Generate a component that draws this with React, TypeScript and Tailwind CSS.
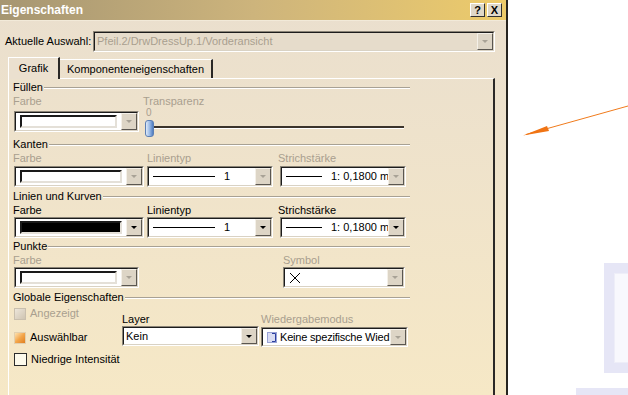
import React from "react";

const GRAY = "text-[#a99f8f]";

function DropBtn({ disabled }: { disabled?: boolean }) {
  return (
    <div className="w-[16px] h-full shrink-0 bg-[#ddd5c6] border border-t-[#f4f0e8] border-l-[#f4f0e8] border-b-[#5a5650] border-r-[#5a5650] flex items-center justify-center">
      <div
        className={`w-0 h-0 border-l-[3px] border-r-[3px] border-t-[3px] border-l-transparent border-r-transparent ${
          disabled ? "border-t-[#a8a296]" : "border-t-black"
        }`}
      />
    </div>
  );
}

function Combo({
  className = "",
  children,
  disabled,
  fieldBg = "bg-white",
  h = "h-[21px]",
}: {
  className?: string;
  children?: React.ReactNode;
  disabled?: boolean;
  fieldBg?: string;
  h?: string;
}) {
  return (
    <div
      className={`flex ${h} border border-t-[#8a8477] border-l-[#8a8477] border-b-white border-r-white ${className}`}
    >
      <div className="flex flex-1 min-w-0 border border-t-[#1c1c1c] border-l-[#1c1c1c] border-b-[#d9d2c4] border-r-[#d9d2c4]">
        <div className={`flex-1 min-w-0 ${fieldBg} flex items-center overflow-hidden whitespace-nowrap`}>
          {children}
        </div>
        <DropBtn disabled={disabled} />
      </div>
    </div>
  );
}

function Swatch({ black }: { black?: boolean }) {
  return (
    <div
      className={`flex-1 mx-[4px] h-[13px] border-2 border-t-[#1a1a1a] border-l-[#1a1a1a] border-b-[#e4e0d8] border-r-[#e4e0d8] ${
        black ? "bg-black" : "bg-white"
      }`}
    />
  );
}

function LineType() {
  return (
    <div className="flex items-center w-full pl-[4px]">
      <div className="w-[62px] h-px bg-black shrink-0" />
      <span className="ml-[9px] shrink-0">1</span>
    </div>
  );
}

function Thick() {
  return (
    <div className="flex items-center pl-[4px] shrink-0">
      <div className="w-[36px] h-px bg-black shrink-0" />
      <span className="ml-[9px] shrink-0">1: 0,1800 mm</span>
    </div>
  );
}

function Header({ text, mt }: { text: string; mt: string }) {
  return (
    <div className={`flex items-center h-[13px] ml-[4px] w-[397px] ${mt}`}>
      <span className="leading-none">{text}</span>
      <div className="flex-1 ml-px h-[2px] border-t border-t-[#a8a194] border-b border-b-white" />
    </div>
  );
}

export default function App() {
  return (
    <div className="w-[628px] h-[395px] bg-white relative overflow-hidden flex font-['Liberation_Sans',Arial,sans-serif] text-[11px] text-black">
      {/* Dialog */}
      <div className="w-[508px] h-full shrink-0 flex flex-col border-r-2 border-r-[#262420] bg-gradient-to-b from-[#eadfce] to-[#f6e8c6]">
        {/* Title bar */}
        <div className="h-[21px] shrink-0 flex items-center bg-gradient-to-r from-[#a69672] via-[#cdb47c] to-[#edcb6a] border-b border-b-[#f2ead9]">
          <span className="ml-[1px] text-white font-bold text-[12px] leading-none">Eigenschaften</span>
          <div className="ml-auto mr-[4px] flex gap-[2px]">
            <div className="w-[15px] h-[14px] bg-[#e0d8c8] border border-t-white border-l-white border-b-[#303030] border-r-[#303030] flex items-center justify-center font-bold text-[11px] leading-none">
              ?
            </div>
            <div className="w-[15px] h-[14px] bg-[#e0d8c8] border border-t-white border-l-white border-b-[#303030] border-r-[#303030] flex items-center justify-center font-bold text-[11px] leading-none">
              X
            </div>
          </div>
        </div>

        {/* Aktuelle Auswahl */}
        <div className="flex items-center mt-[10px] h-[21px]">
          <span className="ml-[5px] w-[88px] shrink-0 whitespace-nowrap">Aktuelle Auswahl:</span>
          <Combo className="w-[402px]" disabled fieldBg="bg-[#e6dccb]">
            <span className={`ml-[2px] ${GRAY}`}>Pfeil.2/DrwDressUp.1/Vorderansicht</span>
          </Combo>
        </div>

        {/* Tabs */}
        <div className="flex items-end ml-[8px] mt-[4px] h-[22px]">
          <div className="w-[52px] h-[22px] border-t border-l border-t-white border-l-white border-r-2 border-r-[#2a2826] flex items-center justify-center -mb-px relative z-10 bg-[#ebe0cf]">
            Grafik
          </div>
          <div className="w-[153px] h-[19px] border-t border-t-white border-r-2 border-r-[#2a2826] flex items-center justify-center">
            Komponenteneigenschaften
          </div>
        </div>

        {/* Panel */}
        <div className="ml-[8px] w-[487px] flex-1 border-t border-l border-t-white border-l-white border-r-2 border-r-[#2a2826] flex flex-col">
          {/* Füllen */}
          <Header text="Füllen" mt="mt-[2px]" />
          <div className="flex h-[13px] mt-px ml-[4px] items-center">
            <span className={`w-[130px] ${GRAY}`}>Farbe</span>
            <span className={GRAY}>Transparenz</span>
          </div>
          <div className="flex mt-[3px] ml-[5px] h-[21px]">
            <Combo className="w-[125px]" disabled>
              <Swatch />
            </Combo>
            <div className="ml-[5px] w-[262px] h-[26px] relative">
              <span className={`absolute left-[2px] -top-[3px] leading-none text-[10px] ${GRAY}`}>0</span>
              <div className="absolute left-[6px] right-[2px] top-[15px] h-[3px] bg-[#3b342c] border-b border-b-white" />
              <div className="absolute left-[1px] top-[9px] w-[9px] h-[17px] rounded-[3px] border border-[#5c7fb4] bg-gradient-to-r from-[#dfeaf8] via-[#9cbbe6] to-[#4f7cc0]" />
            </div>
          </div>

          {/* Kanten */}
          <Header text="Kanten" mt="mt-[6px]" />
          <div className="flex h-[12px] mt-px ml-[4px] items-center">
            <span className={`w-[134px] ${GRAY}`}>Farbe</span>
            <span className={`w-[131px] ${GRAY}`}>Linientyp</span>
            <span className={GRAY}>Strichstärke</span>
          </div>
          <div className="flex mt-[2px] ml-[5px] h-[21px]">
            <Combo className="w-[130px]" disabled>
              <Swatch />
            </Combo>
            <Combo className="w-[126px] ml-[3px]" disabled>
              <LineType />
            </Combo>
            <Combo className="w-[126px] ml-[7px]" disabled>
              <Thick />
            </Combo>
          </div>

          {/* Linien und Kurven */}
          <Header text="Linien und Kurven" mt="mt-[3px]" />
          <div className="flex h-[12px] mt-px ml-[4px] items-center">
            <span className="w-[134px]">Farbe</span>
            <span className="w-[131px]">Linientyp</span>
            <span>Strichstärke</span>
          </div>
          <div className="flex mt-px ml-[5px] h-[21px]">
            <Combo className="w-[130px]">
              <Swatch black />
            </Combo>
            <Combo className="w-[126px] ml-[3px]">
              <LineType />
            </Combo>
            <Combo className="w-[126px] ml-[7px]">
              <Thick />
            </Combo>
          </div>

          {/* Punkte */}
          <Header text="Punkte" mt="mt-[2px]" />
          <div className="flex h-[12px] mt-px ml-[4px] items-center">
            <span className={`w-[270px] ${GRAY}`}>Farbe</span>
            <span className={GRAY}>Symbol</span>
          </div>
          <div className="flex mt-px ml-[5px] h-[21px]">
            <Combo className="w-[125px]" disabled>
              <Swatch />
            </Combo>
            <Combo className="w-[122px] ml-[144px]" disabled>
              <svg width="12" height="12" viewBox="0 0 12 12" className="ml-[4px]">
                <path d="M1 1L11 11M11 1L1 11" stroke="#000" strokeWidth="1" fill="none" />
              </svg>
            </Combo>
          </div>

          {/* Globale Eigenschaften */}
          <Header text="Globale Eigenschaften" mt="mt-[3px]" />
          <div className="flex ml-[5px]">
            <div className="w-[108px] flex flex-col">
              <div className="flex items-center h-[13px] mt-[3px]">
                <div className="w-[12px] h-[12px] border border-[#c9bfae] bg-gradient-to-br from-[#ede6da] to-[#cfc4b2]" />
                <span className={`ml-[4px] ${GRAY}`}>Angezeigt</span>
              </div>
              <div className="flex items-center h-[13px] mt-[11px]">
                <div className="w-[12px] h-[12px] border border-[#e2cfae] bg-gradient-to-br from-[#fbe2b0] via-[#f3a64a] to-[#e07e1c]" />
                <span className="ml-[4px]">Auswählbar</span>
              </div>
              <div className="flex items-center h-[13px] mt-[9px]">
                <div className="w-[13px] h-[13px] border border-[#2c2c2c] bg-[#fdfaec]" />
                <span className="ml-[4px]">Niedrige Intensität</span>
              </div>
            </div>
            <div className="flex flex-col w-[139px]">
              <div className="h-[12px] mt-[9px] flex items-center">Layer</div>
              <Combo className="w-[137px] mt-px" h="h-[20px]">
                <span className="ml-[2px]">Kein</span>
              </Combo>
            </div>
            <div className="flex flex-col">
              <div className={`h-[12px] mt-[9px] flex items-center ${GRAY}`}>Wiedergabemodus</div>
              <Combo className="w-[147px] mt-[2px]" h="h-[20px]" disabled>
                <svg width="10" height="11" viewBox="0 0 10 11" className="ml-[4px] shrink-0">
                  <rect x="0.5" y="0.5" width="9" height="10" fill="#d9dcf2" stroke="#9aa3d6" />
                  <path d="M5 1.5H8.5V9.5H5" stroke="#2b3fa0" fill="none" />
                </svg>
                <span className="ml-[3px] tracking-[-0.2px]">Keine spezifische Wied</span>
              </Combo>
            </div>
          </div>
        </div>
      </div>

      {/* Canvas drawing */}
      <svg className="absolute left-0 top-0" width="628" height="395" viewBox="0 0 628 395">
        <line x1="628" y1="106" x2="526" y2="134.5" stroke="#f07b1c" strokeWidth="1" />
        <path d="M523 135.5 L547 126 L549 131 Z" fill="#f07414" />
      </svg>
      <div className="absolute left-[604px] top-[263px] w-[24px] h-[110px] bg-[#e6e6f6]">
        <div className="absolute left-[10px] top-[10px] w-[20px] h-[90px] border border-[#eeeef8] bg-[#f8f8fd]" />
      </div>
      <div className="absolute left-[576px] top-[388px] w-[52px] h-[7px] bg-[#e6e6f6]" />
    </div>
  );
}
